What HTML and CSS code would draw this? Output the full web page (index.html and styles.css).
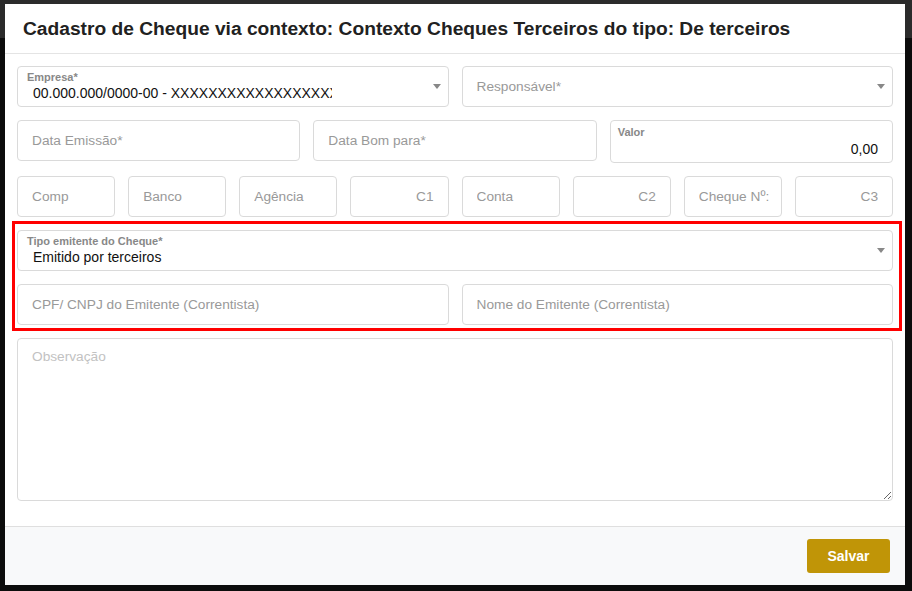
FILE: index.html
```html
<!DOCTYPE html>
<html lang="pt-BR">
<head>
<meta charset="utf-8">
<title>Cadastro de Cheque</title>
<link rel="stylesheet" href="styles.css">
</head>
<body>
<div class="modal">
  <div class="modal-header">
    <h1 class="title">Cadastro de Cheque via contexto: Contexto Cheques Terceiros do tipo: De terceiros</h1>
  </div>
  <div class="modal-body">
    <div class="row cols-2">
      <div class="field select filled">
        <div class="stack">
          <span class="flabel">Empresa*</span>
          <span class="fvalue clip">00.000.000/0000-00 - XXXXXXXXXXXXXXXXXXXXXX</span>
        </div>
        <span class="caret"></span>
      </div>
      <div class="field select">
        <span class="ph grow">Responsável*</span>
        <span class="caret"></span>
      </div>
    </div>
    <div class="row cols-3">
      <input class="field input" type="text" placeholder="Data Emissão*">
      <input class="field input" type="text" placeholder="Data Bom para*">
      <div class="field valor">
        <span class="flabel">Valor</span>
        <span class="fvalue right">0,00</span>
      </div>
    </div>
    <div class="row cols-8">
      <input class="field input" type="text" placeholder="Comp">
      <input class="field input" type="text" placeholder="Banco">
      <input class="field input" type="text" placeholder="Agência">
      <input class="field input right" type="text" placeholder="C1">
      <input class="field input" type="text" placeholder="Conta">
      <input class="field input right" type="text" placeholder="C2">
      <input class="field input tight" type="text" placeholder="Cheque Nº:">
      <input class="field input right" type="text" placeholder="C3">
    </div>
    <div class="row">
      <div class="field select filled">
        <div class="stack">
          <span class="flabel">Tipo emitente do Cheque*</span>
          <span class="fvalue">Emitido por terceiros</span>
        </div>
        <span class="caret"></span>
      </div>
    </div>
    <div class="row cols-2">
      <input class="field input" type="text" placeholder="CPF/ CNPJ do Emitente (Correntista)">
      <input class="field input" type="text" placeholder="Nome do Emitente (Correntista)">
    </div>
    <div class="row">
      <textarea class="obs" placeholder="Observação"></textarea>
    </div>
    <div class="highlight"></div>
  </div>
  <div class="modal-footer">
    <button class="btn-save" type="button">Salvar</button>
  </div>
</div>
</body>
</html>
```
FILE: styles.css
```css
html, body {
  margin: 0;
  padding: 0;
}
body {
  width: 912px;
  height: 591px;
  overflow: hidden;
  background: linear-gradient(#2b2b2b 0, #2b2b2b 38px, #0c0c0c 38px, #0c0c0c 100%);
  font-family: "Liberation Sans", Arial, sans-serif;
  color: #212529;
  padding-top: 4px;
  padding-left: 5px;
  box-sizing: border-box;
}
.modal {
  width: 900px;
  height: 581px;
  background: #fff;
  display: flex;
  flex-direction: column;
}
.modal-header {
  height: 49px;
  border-bottom: 1px solid #e4e4e4;
  display: flex;
  align-items: center;
  padding: 0 18px;
}
.title {
  margin: 0;
  font-size: 19.2px;
  font-weight: bold;
  color: #212121;
  white-space: nowrap;
}
.modal-body {
  position: relative;
  height: 472px;
  box-sizing: border-box;
  padding: 12px 12px 25px;
  display: flex;
  flex-direction: column;
  gap: 13px;
}
.row {
  display: grid;
  gap: 13px;
  align-items: start;
}
.cols-2 { grid-template-columns: 1fr 1fr; }
.cols-3 { grid-template-columns: 1fr 1fr 1fr; }
.cols-8 { grid-template-columns: repeat(8, 1fr); }

.field {
  box-sizing: border-box;
  height: 41px;
  border: 1px solid #dadada;
  border-radius: 4px;
  background: #fff;
  font-family: "Liberation Sans", Arial, sans-serif;
  font-size: 13.7px;
  color: #212529;
  min-width: 0;
  margin: 0;
}
.input {
  padding: 0 14px 1px;
  outline: none;
  width: 100%;
}
.input.right { text-align: right; }
.input.tight { padding-right: 4px; }
.input::placeholder { color: #999; opacity: 1; }

.select {
  display: flex;
  align-items: center;
  padding: 0 7px 0 14px;
}
.select.filled { padding-left: 9px; align-items: stretch; }
.stack {
  flex: 1;
  min-width: 0;
  display: flex;
  flex-direction: column;
  padding-top: 4px;
}
.flabel {
  font-size: 11px;
  font-weight: bold;
  color: #888;
  line-height: 13px;
}
.fvalue {
  font-size: 14px;
  line-height: 18px;
  color: #111;
  padding-left: 6px;
  white-space: nowrap;
}
.clip {
  width: 299px;
  overflow: hidden;
}
.grow { flex: 1; }
.ph { color: #999; }
.caret {
  align-self: center;
  width: 0;
  height: 0;
  border-left: 4px solid transparent;
  border-right: 4px solid transparent;
  border-top: 5px solid #888;
}
.valor {
  height: 43px;
  display: flex;
  flex-direction: column;
  padding: 5px 14px 0 7px;
}
.valor .fvalue { text-align: right; padding-left: 0; line-height: 20px; }

.obs {
  box-sizing: border-box;
  width: 100%;
  height: 163px;
  margin: 0;
  border: 1px solid #dadada;
  border-radius: 4px;
  padding: 8px 14px;
  font-family: "Liberation Sans", Arial, sans-serif;
  font-size: 13.7px;
  line-height: 20px;
  resize: vertical;
  outline: none;
  display: block;
}
.obs::placeholder { color: #c2c2c2; opacity: 1; }

.highlight {
  position: absolute;
  left: 7px;
  top: 167px;
  width: 890px;
  height: 110px;
  border: 3px solid #f00;
  box-sizing: border-box;
  pointer-events: none;
}

.modal-footer {
  flex: 1;
  border-top: 1px solid #dfdfdf;
  background: #f8f9fa;
  display: flex;
  align-items: center;
  justify-content: flex-end;
  padding-right: 15px;
}
.btn-save {
  width: 83px;
  height: 34px;
  border: none;
  border-radius: 3px;
  background: #c09507;
  color: #fff;
  font-family: "Liberation Sans", Arial, sans-serif;
  font-weight: bold;
  font-size: 14px;
  cursor: pointer;
}
```
